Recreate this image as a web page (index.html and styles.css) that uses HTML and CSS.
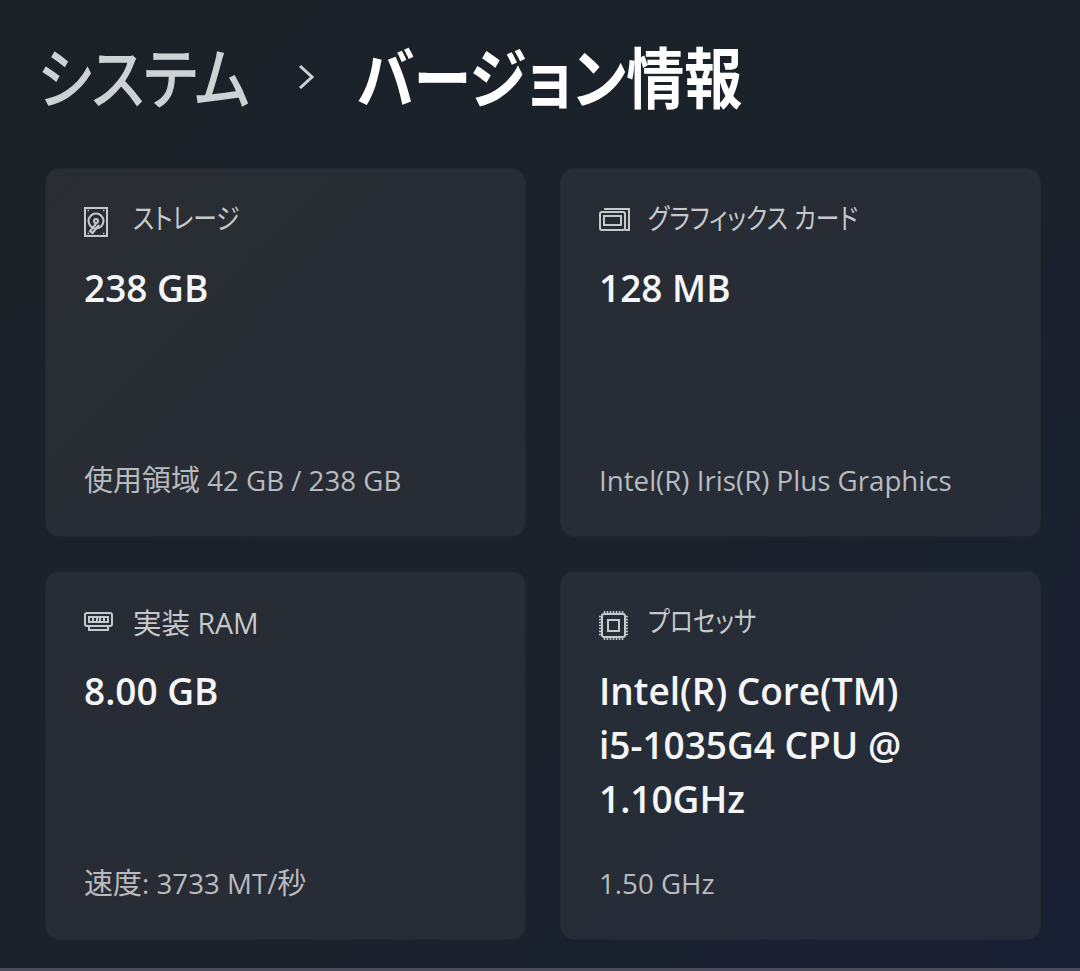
FILE: index.html
```html
<!DOCTYPE html>
<html lang="ja">
<head>
    <meta charset="UTF-8">
    <meta name="viewport" content="width=device-width, initial-scale=1.0">
    <title>バージョン情報</title>
    <link rel="stylesheet" href="styles.css">
</head>
<body>
    <div class="page">
        <h1 class="breadcrumb">
            <span class="crumb-parent">システム</span>
            <svg class="crumb-arrow" viewBox="0 0 16 26"><path d="M2 2 L14 13 L2 24"/></svg>
            <span class="crumb-current">バージョン情報</span>
        </h1>
        <div class="cards">
            <section class="card">
                <div class="card-head">
                    <svg class="icon icon-disk" viewBox="0 0 24 30">
                        <rect x="1" y="1" width="22" height="28"/>
                        <circle cx="12" cy="14" r="7.5"/>
                        <circle cx="12" cy="14" r="2"/>
                        <path d="M12 17 L6 24 L8.500 26 L15 18"/>
                        <path class="dots" d="M3.500 3.500 H5 M19 3.500 H20.500 M3.500 26.500 H5 M19 26.500 H20.500"/>
                    </svg>
                    <span class="kana">ストレージ</span>
                </div>
                <div class="card-value">238 GB</div>
                <div class="card-foot"><span class="cjk">使用領域</span> 42 GB / 238 GB</div>
            </section>
            <section class="card">
                <div class="card-head">
                    <svg class="icon icon-gpu" viewBox="0 0 31 23">
                        <path d="M5 1 H30 V22 H26"/>
                        <rect x="1" y="4" width="25" height="18" rx="2"/>
                        <rect x="5" y="8" width="17" height="9"/>
                    </svg>
                    <span class="kana">グラフィックス カード</span>
                </div>
                <div class="card-value">128 MB</div>
                <div class="card-foot">Intel(R) Iris(R) Plus Graphics</div>
            </section>
            <section class="card">
                <div class="card-head">
                    <svg class="icon icon-ram" viewBox="0 0 29 19">
                        <rect x="1" y="1" width="27" height="13" rx="2"/>
                        <rect x="5" y="5" width="19" height="5"/>
                        <path d="M9 5 V10 M13 5 V10 M16 5 V10 M20 5 V10"/>
                        <path d="M5 14 V18 H24 V14"/>
                    </svg>
                    <span>実装 RAM</span>
                </div>
                <div class="card-value">8.00 GB</div>
                <div class="card-foot"><span class="cjk">速度</span>: 3733 MT/<span class="cjk">秒</span></div>
            </section>
            <section class="card">
                <div class="card-head">
                    <svg class="icon icon-cpu" viewBox="0 0 29 29">
                        <rect x="3" y="3" width="23" height="23" rx="2"/>
                        <rect x="9" y="9" width="11" height="11"/>
                        <path class="pins" d="M0 5.500 H3 M0 8.500 H3 M0 11.500 H3 M0 14.500 H3 M0 17.500 H3 M0 20.500 H3 M0 23.500 H3 M26 5.500 H29 M26 8.500 H29 M26 11.500 H29 M26 14.500 H29 M26 17.500 H29 M26 20.500 H29 M26 23.500 H29 M5.500 0 V3 M8.500 0 V3 M11.500 0 V3 M14.500 0 V3 M17.500 0 V3 M20.500 0 V3 M23.500 0 V3 M5.500 26 V29 M8.500 26 V29 M11.500 26 V29 M14.500 26 V29 M17.500 26 V29 M20.500 26 V29 M23.500 26 V29"/>
                    </svg>
                    <span class="kana">プロセッサ</span>
                </div>
                <div class="card-value">Intel(R) Core(TM)<br>i5-1035G4 CPU @<br>1.10GHz</div>
                <div class="card-foot">1.50 GHz</div>
            </section>
        </div>
    </div>
</body>
</html>
```

FILE: styles.css
```css
* {
    margin: 0;
    padding: 0;
    box-sizing: border-box;
}
body {
    font-family: 'Open Sans', 'Noto Sans CJK JP', sans-serif;
    background: linear-gradient(135deg, #1b2127 0%, #1b222a 55%, #1a2034 100%);
    color: #fff;
    height: 971px;
    overflow: hidden;
}
.page {
    height: 971px;
    padding: 37px 39px 0 38px;
    border-bottom: 3px solid #4b4b5c;
}
.breadcrumb {
    display: flex;
    align-items: center;
    height: 80px;
    font-size: 66px;
    font-weight: 700;
    line-height: 80px;
    white-space: nowrap;
    font-feature-settings: "palt";
}
/* the kana in the reference are narrower than Noto's, even with palt */
.crumb-parent {
    color: #cfd2d5;
    width: 260px;
    font-weight: 400;
    -webkit-text-stroke: 1.5px #cfd2d5;
    transform: scaleX(0.88);
    transform-origin: left center;
}
.crumb-arrow {
    width: 16px;
    height: 26px;
    fill: none;
    stroke: #cfd2d5;
    stroke-width: 3;
    margin-right: 43px;
}
.crumb-current {
    color: #fff;
    transform: scaleX(0.88);
    transform-origin: left center;
}
.cards {
    display: grid;
    grid-template-columns: 481px 481px;
    grid-auto-rows: 369px;
    gap: 34px;
    margin: 51px 0 0 7px;
}
.card {
    display: flex;
    flex-direction: column;
    background: linear-gradient(135deg, #2a2e33 0%, #272c35 50%, #262c39 100%);
    background-attachment: fixed;
    border: 1px solid #23282f;
    border-radius: 14px;
    padding: 29px 38px 36px;
}
.card-head {
    display: grid;
    grid-template-columns: 49px 1fr;
    align-items: center;
    font-size: 28.5px;
    color: #c6c9cc;
    height: 40px;
    font-feature-settings: "palt";
}
.kana {
    display: inline-block;
    white-space: nowrap;
    transform: translateY(-2px) scaleX(0.83);
    transform-origin: left center;
}
.icon {
    fill: none;
    stroke: #c6c9cc;
    stroke-width: 2;
}
.icon-disk {
    width: 24px;
    height: 30px;
    margin-top: 6px;
}
.dots {
    stroke-width: 1.5;
}
.icon-gpu {
    width: 31px;
    height: 23px;
    margin-top: 2px;
}
.icon-ram {
    width: 29px;
    height: 19px;
}
.icon-cpu {
    width: 29px;
    height: 29px;
    margin-top: 8px;
}
.pins {
    stroke-width: 1.6;
}
.card-value {
    margin-top: 23px;
    font-size: 37px;
    font-weight: 600;
    line-height: 54px;
    color: #f4f5f6;
}
.card-foot {
    margin-top: auto;
    font-size: 27.7px;
    line-height: 40px;
    color: #b8bbbe;
}
.cjk {
    font-size: 29px;
}
```
